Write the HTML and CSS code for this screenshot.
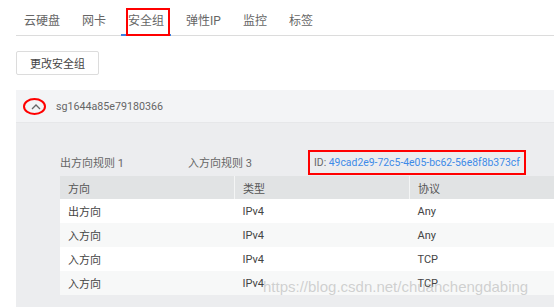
FILE: index.html
```html
<!DOCTYPE html>
<html lang="zh">
<head>
    <meta charset="UTF-8">
    <title>安全组</title>
    <link rel="stylesheet" href="styles.css">
</head>
<body>

<div class="page">
    <ul class="tabs">
        <li>云硬盘</li>
        <li>网卡</li>
        <li class="active">安全组<span class="mark-box"></span></li>
        <li>弹性IP</li>
        <li>监控</li>
        <li>标签</li>
    </ul>

    <button class="btn">更改安全组</button>

    <div class="panel">
        <div class="panel-head">
            <span class="toggle">
                <svg width="10" height="6" viewBox="0 0 10 6"><path d="M1 5 L5 1 L9 5" fill="none" stroke="#666" stroke-width="1.3"/></svg>
                <span class="mark-ring"></span>
            </span>
            <span class="sg-name">sg1644a85e79180366</span>
        </div>
        <div class="panel-body">
            <div class="counts">
                <span class="count">出方向规则 1</span>
                <span class="count">入方向规则 3</span>
                <span class="sg-id">ID: <a href="#">49cad2e9-72c5-4e05-bc62-56e8f8b373cf</a></span>
            </div>
            <table class="rules">
                <thead>
                    <tr><th>方向</th><th>类型</th><th>协议</th></tr>
                </thead>
                <tbody>
                    <tr><td>出方向</td><td>IPv4</td><td>Any</td></tr>
                    <tr><td>入方向</td><td>IPv4</td><td>Any</td></tr>
                    <tr><td>入方向</td><td>IPv4</td><td>TCP</td></tr>
                    <tr><td>入方向</td><td>IPv4</td><td>TCP</td></tr>
                </tbody>
            </table>
        </div>
    </div>
</div>

<div class="watermark">https://blog.csdn.net/chuanchengdabing</div>

</body>
</html>
```

FILE: styles.css
```css
/* Base */
body {
    margin: 0;
    font-family: Roboto, "Noto Sans CJK SC", sans-serif;
    color: #555;
    background: #fff;
    overflow: hidden;
    height: 307px;
}
.page {
    padding-left: 16px;
}

/* Tabs */
.tabs {
    list-style: none;
    margin: 0;
    padding: 0 0 0 8px;
    display: flex;
    gap: 22px;
    border-bottom: 1px solid #dcdcdc;
    height: 36px;
    box-sizing: border-box;
}
.tabs li {
    position: relative;
    font-size: 12px;
    line-height: 14px;
    padding-top: 14px;
    color: #666;
}
.tabs li.active::after {
    content: "";
    position: absolute;
    left: -7px;
    right: -7px;
    bottom: -1px;
    height: 2px;
    background: #3d7fe0;
}
.mark-box {
    position: absolute;
    left: -2px;
    right: -6px;
    top: 8px;
    bottom: -1px;
    border: 2px solid #f00;
    z-index: 1;
}

/* Button */
.btn {
    display: block;
    margin-top: 15px;
    width: 83px;
    height: 24px;
    border: 1px solid #dcdcdc;
    border-radius: 2px;
    background: #fff;
    font-family: inherit;
    font-size: 11px;
    color: #444;
    padding: 0;
}

/* Panel */
.panel {
    margin-top: 15px;
}
.panel-head {
    display: flex;
    align-items: center;
    height: 33px;
    background: #f3f4f6;
    border-bottom: 1px solid #e6e7e9;
    box-sizing: border-box;
}
.toggle {
    position: relative;
    width: 40px;
    display: flex;
    justify-content: center;
    margin-top: 2px;
}
.mark-ring {
    position: absolute;
    left: 7px;
    top: -6px;
    width: 19px;
    height: 13px;
    border: 2px solid #f00;
    border-radius: 50%;
}
.sg-name {
    font-size: 10.7px;
    color: #666;
}
.panel-body {
    background: #ecedef;
    padding: 31px 0 0 44px;
    height: 160px;
}
.counts {
    display: flex;
    align-items: center;
    font-size: 11px;
    height: 16px;
    margin-bottom: 6px;
}
.count {
    width: 128px;
    color: #666;
}
.sg-id {
    color: #666;
    font-size: 10.4px;
    border: 2px solid #f00;
    padding: 4px;
    margin-left: -8px;
}
.sg-id a {
    color: #3d8be8;
    text-decoration: none;
}

/* Table */
.rules {
    width: 100%;
    border-collapse: collapse;
    font-size: 11px;
}
.rules th,
.rules td {
    text-align: left;
    height: 24px;
    padding: 0 8px;
    font-weight: normal;
}
.rules th {
    background: #e1e3e4;
    color: #555;
    height: 23px;
    border-left: 1px solid #f4f5f5;
}
.rules th:first-child {
    border-left: none;
}
.rules th:nth-child(1),
.rules th:nth-child(2) {
    width: 158px;
}
.rules td {
    color: #444;
}
.rules tbody tr:nth-child(odd) {
    background: #fff;
}
.rules tbody tr:nth-child(even) {
    background: #f7f8f8;
}

/* Watermark */
.watermark {
    position: absolute;
    left: 263px;
    top: 278px;
    font-family: "Liberation Sans", sans-serif;
    font-size: 15px;
    color: rgba(190, 190, 190, 0.7);
}
```
